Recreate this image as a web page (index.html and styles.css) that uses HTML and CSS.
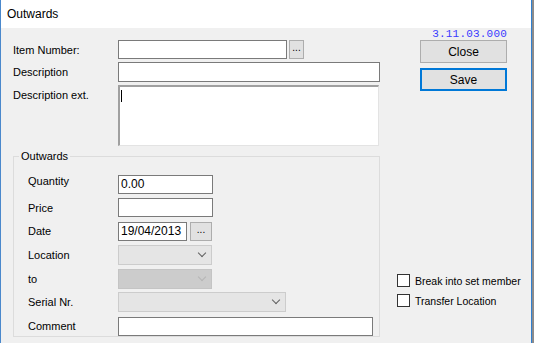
FILE: index.html
```html
<!DOCTYPE html>
<html lang="en">
<head>
    <meta charset="UTF-8">
    <title>Outwards</title>
    <link rel="stylesheet" href="styles.css">
</head>
<body>
    <div class="window">
        <div class="titlebar">Outwards</div>
        <div class="content">
            <div class="form">
                <div class="row row-item">
                    <label class="label">Item Number:</label>
                    <input type="text" class="input w-item">
                    <button class="dots">...</button>
                </div>
                <div class="row row-desc">
                    <label class="label">Description</label>
                    <input type="text" class="input w-desc">
                </div>
                <div class="row row-ext">
                    <label class="label label-top">Description ext.</label>
                    <div class="textarea"><span class="caret"></span></div>
                </div>

                <fieldset class="group">
                    <legend class="legend">Outwards</legend>
                    <div class="row grow">
                        <label class="label glabel up">Quantity</label>
                        <input type="text" class="input w-small" value="0.00">
                    </div>
                    <div class="row grow">
                        <label class="label glabel">Price</label>
                        <input type="text" class="input w-small">
                    </div>
                    <div class="row grow">
                        <label class="label glabel">Date</label>
                        <input type="text" class="input w-date" value="19/04/2013">
                        <button class="dots dots-date">...</button>
                    </div>
                    <div class="row grow">
                        <label class="label glabel">Location</label>
                        <div class="combo w-combo"><span class="chev"></span></div>
                    </div>
                    <div class="row grow">
                        <label class="label glabel">to</label>
                        <div class="combo combo-dark w-combo"><span class="chev"></span></div>
                    </div>
                    <div class="row grow">
                        <label class="label glabel">Serial Nr.</label>
                        <div class="combo w-serial"><span class="chev"></span></div>
                    </div>
                    <div class="row grow">
                        <label class="label glabel">Comment</label>
                        <input type="text" class="input w-comment">
                    </div>
                </fieldset>
            </div>

            <div class="side">
                <div class="version">3.11.03.000</div>
                <button class="btn">Close</button>
                <button class="btn btn-default">Save</button>
                <div class="checks">
                    <label class="check"><span class="box"></span>Break into set member</label>
                    <label class="check"><span class="box"></span>Transfer Location</label>
                </div>
            </div>
        </div>
    </div>
</body>
</html>
```

FILE: styles.css
```css
body {
    margin: 0;
    background-color: #8c8c8c;
    font-family: "Liberation Sans", Arial, sans-serif;
    font-size: 11px;
    color: #000;
}
.window {
    width: 530px;
    height: 343px;
    border-left: 1px solid #4a88cc;
    border-right: 1px solid #2f7fd0;
    display: flex;
    flex-direction: column;
    overflow: hidden;
}
.titlebar {
    height: 28px;
    background-color: #fff;
    padding-left: 6px;
    display: flex;
    align-items: center;
    font-size: 12px;
}
.content {
    flex: 1;
    background-color: #f0f0f0;
    display: flex;
}
.form {
    width: 367px;
    padding-top: 12px;
    padding-left: 12px;
}
.row {
    display: flex;
    align-items: center;
}
.label {
    width: 105px;
    flex-shrink: 0;
}
.label-top {
    align-self: flex-start;
    padding-top: 4px;
}
.row-desc { margin-top: 3px; }
.row-ext { margin-top: 3px; }
.input {
    box-sizing: border-box;
    height: 19px;
    margin: 0;
    padding: 0 2px;
    border: 1px solid #7a7a7a;
    background-color: #fff;
    font-family: inherit;
    font-size: 12px;
    outline: none;
}
.w-item { width: 169px; }
.w-desc { width: 263px; height: 20px; }
.w-small { width: 95px; }
.w-date { width: 69px; }
.w-comment { width: 255px; }
.dots {
    box-sizing: border-box;
    width: 15px;
    height: 19px;
    margin: 0 0 0 2px;
    padding: 0 0 3px;
    border: 1px solid #adadad;
    background-color: #e1e1e1;
    font-family: inherit;
    font-size: 10px;
    line-height: 1;
}
.dots-date {
    width: 22px;
    margin-left: 3px;
}
.textarea {
    box-sizing: border-box;
    width: 261px;
    height: 61px;
    background-color: #fff;
    border-top: 2px solid #a0a0a0;
    border-left: 2px solid #a0a0a0;
    border-right: 1px solid #e3e3e3;
    border-bottom: 1px solid #e3e3e3;
    padding: 3px 0 0 1px;
}
.caret {
    display: block;
    width: 1px;
    height: 12px;
    background-color: #000;
}
.group {
    width: 367px;
    box-sizing: border-box;
    margin: 4px 0 0;
    padding: 12px 0 0 14px;
    height: 187px;
    border: 1px solid #dcdcdc;
}
.legend {
    padding: 0 2px;
    margin-left: -9px;
    font-size: 11px;
}
.grow {
    height: 20px;
    margin-bottom: 3.7px;
}
.glabel {
    width: 90px;
}
.up {
    position: relative;
    top: -3px;
}
.combo {
    box-sizing: border-box;
    height: 20px;
    border: 1px solid #cccccc;
    background-color: #e5e5e5;
    display: flex;
    justify-content: flex-end;
    align-items: center;
    padding-right: 6px;
}
.combo-dark {
    background-color: #cccccc;
    border-color: #c4c4c4;
}
.combo-dark .chev {
    border-color: #b5b5b5;
}
.w-combo { width: 94px; }
.w-serial { width: 168px; }
.chev {
    width: 5px;
    height: 5px;
    border-right: 1px solid #606060;
    border-bottom: 1px solid #606060;
    transform: rotate(45deg);
    margin-top: -4px;
}
.side {
    width: 110px;
    margin-left: 17px;
    display: flex;
    flex-direction: column;
    align-items: flex-end;
}
.version {
    font-family: "Liberation Mono", monospace;
    font-size: 11px;
    color: #3a3aff;
    letter-spacing: 0.2px;
    height: 12px;
    line-height: 12px;
}
.btn {
    box-sizing: border-box;
    width: 87px;
    height: 23px;
    margin: 0;
    border: 1px solid #adadad;
    background-color: #e1e1e1;
    font-family: inherit;
    font-size: 12px;
}
.btn-default {
    margin-top: 5px;
    border: 2px solid #0078d7;
}
.checks {
    align-self: flex-start;
    margin-top: 183px;
    display: flex;
    flex-direction: column;
    gap: 7px;
}
.check {
    display: flex;
    align-items: center;
    font-size: 10.5px;
    white-space: nowrap;
}
.box {
    box-sizing: border-box;
    width: 13px;
    height: 13px;
    border: 1px solid #333;
    background-color: #fff;
    margin-right: 5px;
}
```
